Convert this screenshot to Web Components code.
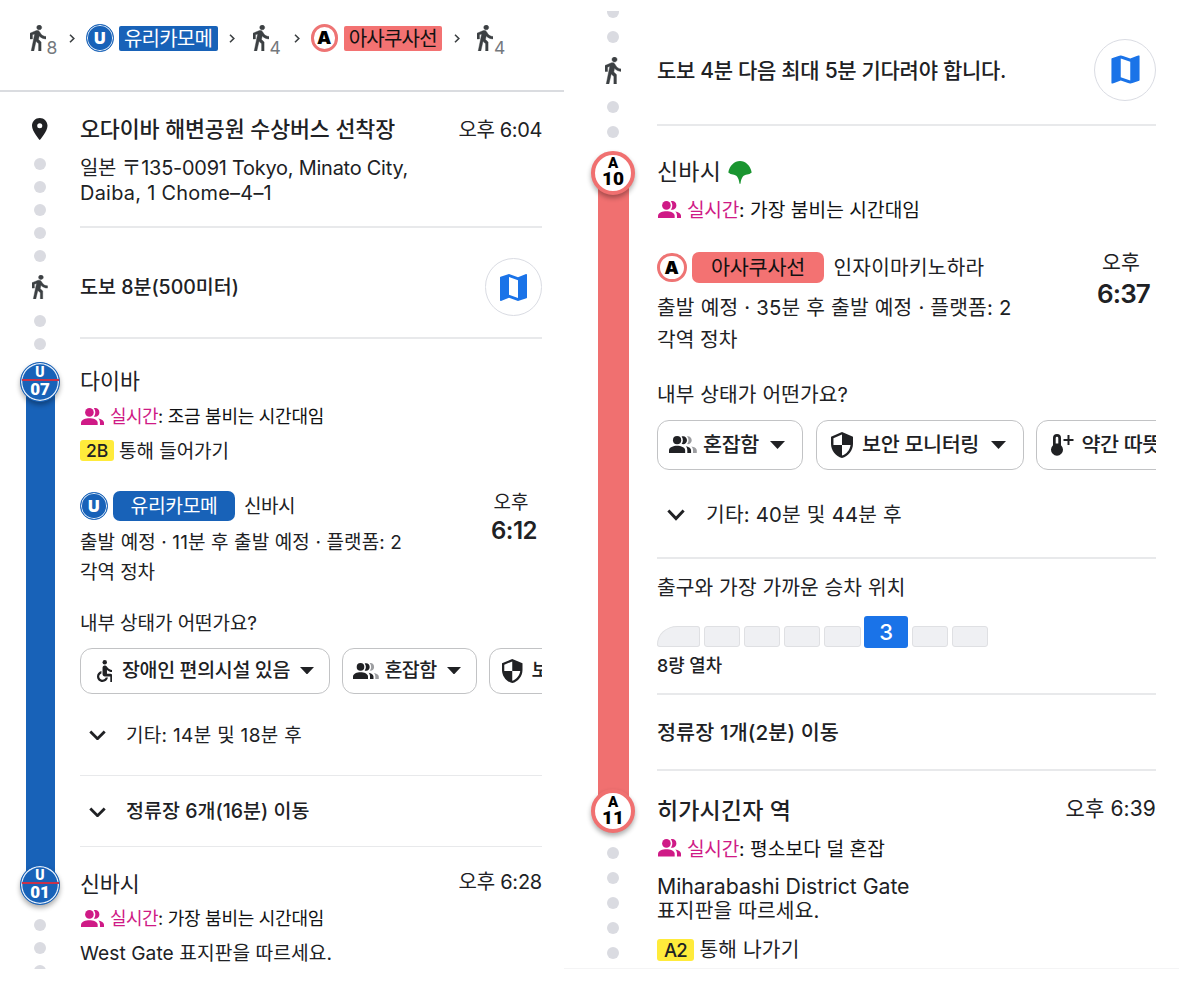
<!DOCTYPE html>
<html lang="ko">
<head>
<meta charset="utf-8">
<title>경로</title>
<style>
body{margin:0;background:#fff;color:#202124;font-family:Inter,"Noto Sans CJK KR",sans-serif;font-size:19px;overflow:hidden}
main{display:grid;grid-template-columns:564px 615px;width:1179px;height:992px;align-items:start}
</style>
</head>
<body>
<main>
<section>
<trip-summary>
<x-icon name="walk" w="16" h="26" style="margin-left:29.5px"></x-icon><fit-text w="10" size="17.5" style="margin:20px 0 0 1px;color:#74787d">8</fit-text>
<x-icon name="next" w="6" h="9" style="margin-left:12.5px"></x-icon>
<line-mark kind="u" style="margin-left:11px">U</line-mark>
<line-pill kind="u" style="--pw:99px;--ph:25px;--pr:2px;margin-left:5px"><fit-text w="88" size="20">유리카모메</fit-text></line-pill>
<x-icon name="next" w="6" h="9" style="margin-left:11px"></x-icon>
<x-icon name="walk" w="16" h="26" style="margin-left:18px"></x-icon><fit-text w="10" size="17.5" style="margin:20px 0 0 1px;color:#74787d">4</fit-text>
<x-icon name="next" w="6" h="9" style="margin-left:14px"></x-icon>
<line-mark kind="a" style="margin-left:11px">A</line-mark>
<line-pill kind="a" style="--pw:98.5px;--ph:25px;--pr:2px;margin-left:5.5px"><fit-text w="88" size="20">아사쿠사선</fit-text></line-pill>
<x-icon name="next" w="6" h="9" style="margin-left:11.5px"></x-icon>
<x-icon name="walk" w="16" h="26" style="margin-left:17.5px"></x-icon><fit-text w="10" size="17.5" style="margin:20px 0 0 1px;color:#74787d">4</fit-text>
</trip-summary>

<route-pane style="height:877px;--rail:80px;--shift:0px;--right:22px">
<x-icon slot="rail" name="pin" w="15.5" h="22" style="margin-top:26px;color:#202124"></x-icon>
<rail-dots slot="rail" count="5" step="11.1" style="margin-top:18px"></rail-dots>
<x-icon slot="rail" name="walk" w="15.5" h="24.5" style="margin-top:12.6px"></x-icon>
<rail-dots slot="rail" count="2" step="11" style="margin-top:15.8px"></rail-dots>
<station-badge slot="rail" kind="u" letter="U" number="07" style="margin-top:11.7px"></station-badge>
<rail-bar slot="rail" style="--bc:#1862b8;width:29px;height:503px;margin:-20px 0"></rail-bar>
<station-badge slot="rail" kind="u" letter="U" number="01"></station-badge>
<rail-dots slot="rail" count="3" step="11.3" style="margin-top:13.7px"></rail-dots>

<trip-row style="--g:22px"><fit-text w="315" size="21.7" weight="500">오다이바 해변공원 수상버스 선착장</fit-text><fit-text class="end" w="83.5" size="20" style="margin-top:1.5px">오후 6:04</fit-text></trip-row>
<trip-row style="--g:11.5px;--h:25px"><fit-text w="328" size="19.9">일본 〒135-0091 Tokyo, Minato City,</fit-text></trip-row>
<trip-row style="--h:25px"><fit-text w="192" size="19.9">Daiba, 1 Chome–4–1</fit-text></trip-row>
<x-rule style="--g:20.5px"></x-rule>
<trip-row style="--g:30.5px;--h:58px"><fit-text w="159" size="19.5" weight="500" style="margin-top:1px">도보 8분(500미터)</fit-text><map-button class="end"></map-button></trip-row>
<x-rule style="--g:21px"></x-rule>
<trip-row style="--g:27.5px"><fit-text w="60" size="21.7">다이바</fit-text></trip-row>
<crowd-note style="--g:9px"><fit-text slot="live" w="48" size="18">실시간</fit-text><fit-text w="166" size="18">: 조금 붐비는 시간대임</fit-text></crowd-note>
<trip-row style="--g:11px;--h:21px"><exit-tag style="--tw:34px"><fit-text w="22" size="17.5" weight="500">2B</fit-text></exit-tag><fit-text w="110" size="19" style="margin-left:5px">통해 들어가기</fit-text></trip-row>
<departure-block style="--g:30px;--tm:-3px;--tr:7px">
<trip-row><line-mark kind="u">U</line-mark><line-pill kind="u" style="--pw:122px;--ph:30px;--pr:7px;margin-left:5.5px"><fit-text w="87" size="19.3">유리카모메</fit-text></line-pill><fit-text w="51" size="19" style="margin-left:9px">신바시</fit-text></trip-row>
<trip-row style="--g:6px"><fit-text w="322" size="19">출발 예정 · 11분 후 출발 예정 · 플랫폼: 2</fit-text></trip-row>
<trip-row><fit-text w="75" size="19">각역 정차</fit-text></trip-row>
<trip-row slot="time" style="--h:28px"><fit-text w="35" size="19" style="margin-right:4px">오후</fit-text></trip-row>
<trip-row slot="time" style="--h:28px"><fit-text w="46" size="24" weight="600" style="margin-left:2px">6:12</fit-text></trip-row>
</departure-block>
<trip-row style="--g:21px"><fit-text w="177" size="19">내부 상태가 어떤가요?</fit-text></trip-row>
<chip-strip style="--g:9.5px;--ch:46px">
<filter-chip style="width:250px"><x-icon name="chair" w="15.5" h="22" style="margin-left:15.5px"></x-icon><fit-text w="168" size="19.5" weight="500" style="margin-left:10px">장애인 편의시설 있음</fit-text><x-icon name="drop" w="14" h="7.5" style="margin-left:10px"></x-icon></filter-chip>
<filter-chip style="width:135.5px"><x-icon name="crowd" w="26" h="16" style="margin-left:10px"></x-icon><fit-text w="52" size="19.5" weight="500" style="margin-left:6px">혼잡함</fit-text><x-icon name="drop" w="14" h="7.5" style="margin-left:10px"></x-icon></filter-chip>
<filter-chip style="width:180px"><x-icon name="shield" w="20.5" h="24" style="margin-left:12.5px"></x-icon><fit-text w="110" size="19.5" weight="500" style="margin-left:9px">보안 모니터링</fit-text></filter-chip>
</chip-strip>
<trip-row style="--g:26.5px"><x-icon name="down" w="17" h="10.5" style="margin-left:9px"></x-icon><fit-text w="176" size="19" style="margin-left:20px">기타: 14분 및 18분 후</fit-text></trip-row>
<x-rule style="--g:24.5px"></x-rule>
<trip-row style="--g:20.5px"><x-icon name="down" w="17" h="10.5" style="margin:1px 0 0 9px"></x-icon><fit-text w="183.5" size="19.5" weight="500" style="margin-left:20px">정류장 6개(16분) 이동</fit-text></trip-row>
<x-rule style="--g:19px"></x-rule>
<trip-row style="--g:22px"><fit-text w="59.5" size="21.7">신바시</fit-text><fit-text class="end" w="83.5" size="20" style="margin-top:-5px">오후 6:28</fit-text></trip-row>
<crowd-note style="--g:8px"><fit-text slot="live" w="48" size="18">실시간</fit-text><fit-text w="166" size="18">: 가장 붐비는 시간대임</fit-text></crowd-note>
<trip-row style="--g:7px"><fit-text w="252" size="19.2">West Gate 표지판을 따르세요.</fit-text></trip-row>
</route-pane>
</section>

<section style="border-bottom:1px solid #f4f4f5">
<route-pane style="margin:11px 0 0 1px;height:957px;--rail:92px;--shift:4px;--right:23px;--rh:2px">
<rail-dots slot="rail" count="2" step="13" style="margin-top:-5px"></rail-dots>
<x-icon slot="rail" name="walk" w="16.5" h="27" style="margin-top:13.500px"></x-icon>
<rail-dots slot="rail" count="2" step="13" style="margin-top:17.500px"></rail-dots>
<station-badge slot="rail" kind="a" letter="A" number="10" style="margin-top:12.5px"></station-badge>
<rail-bar slot="rail" style="--bc:#f07070;width:31px;height:638.5px;margin:-22px 0"></rail-bar>
<station-badge slot="rail" kind="a" letter="A" number="11"></station-badge>
<rail-dots slot="rail" count="5" step="13" style="margin-top:14px"></rail-dots>

<trip-row style="--g:27.5px;--h:62px"><fit-text w="349" size="21" weight="500">도보 4분 다음 최대 5분 기다려야 합니다.</fit-text><map-button class="end" style="--ms:62px;--mi:28.500px"></map-button></trip-row>
<x-rule style="--g:23px"></x-rule>
<trip-row style="--g:31.5px"><fit-text w="64" size="23">신바시</fit-text><x-icon name="leaf" w="24" h="23" style="margin-left:7px;color:#1a9530"></x-icon></trip-row>
<crowd-note style="--g:11px;--iw:25px"><fit-text slot="live" w="52" size="19.2">실시간</fit-text><fit-text w="181" size="19.2">: 가장 붐비는 시간대임</fit-text></crowd-note>
<departure-block style="--g:30px;--tm:-4px;--tr:10.500px">
<trip-row style="--h:31px"><line-mark kind="a" style="--ls:29.500px">A</line-mark><line-pill kind="a" style="--pw:132px;--ph:31px;--pr:7px;margin-left:5.5px"><fit-text w="94" size="20.7">아사쿠사선</fit-text></line-pill><fit-text w="151" size="20.2" style="margin-left:9.5px">인자이마키노하라</fit-text></trip-row>
<trip-row style="--g:9px"><fit-text w="354.500" size="20.3">출발 예정 · 35분 후 출발 예정 · 플랫폼: 2</fit-text></trip-row>
<trip-row style="--g:2px"><fit-text w="80.500" size="20.3">각역 정차</fit-text></trip-row>
<trip-row slot="time"><fit-text w="38" size="20.5" style="margin-right:5px">오후</fit-text></trip-row>
<trip-row slot="time"><fit-text w="53" size="26" weight="600">6:37</fit-text></trip-row>
</departure-block>
<trip-row style="--g:25px"><fit-text w="191" size="20.3">내부 상태가 어떤가요?</fit-text></trip-row>
<chip-strip style="--g:11px;--ch:49.5px;--cg:12.500px">
<filter-chip style="width:146px"><x-icon name="crowd" w="28" h="17" style="margin-left:11px"></x-icon><fit-text w="56" size="20.7" weight="500" style="margin-left:6px">혼잡함</fit-text><x-icon name="drop" w="15" h="8" style="margin-left:11px"></x-icon></filter-chip>
<filter-chip style="width:208px"><x-icon name="shield" w="22" h="26" style="margin-left:14.500px"></x-icon><fit-text w="117" size="20.7" weight="500" style="margin-left:9px">보안 모니터링</fit-text><x-icon name="drop" w="15" h="8" style="margin-left:12px"></x-icon></filter-chip>
<filter-chip style="width:200px"><x-icon name="thermo" w="24" h="22" style="margin-left:12.500px"></x-icon><fit-text w="98" size="20.7" weight="500" style="margin-left:8px">약간 따뜻함</fit-text></filter-chip>
</chip-strip>
<trip-row style="--g:30px"><x-icon name="down" w="18" h="11.5" style="margin:1px 0 0 10px"></x-icon><fit-text w="196" size="20.3" style="margin-left:21px">기타: 40분 및 44분 후</fit-text></trip-row>
<x-rule style="--g:27.5px"></x-rule>
<trip-row style="--g:13px"><fit-text w="248.500" size="20.3">출구와 가장 가까운 승차 위치</fit-text></trip-row>
<train-cars count="8" active="6" label="3" style="--g:14px"></train-cars>
<trip-row style="--g:3px"><fit-text w="65" size="17.8" weight="500">8량 열차</fit-text></trip-row>
<x-rule style="--g:12px;--rh:1.5px"></x-rule>
<trip-row style="--g:23px"><fit-text w="182" size="20.7" weight="500">정류장 1개(2분) 이동</fit-text></trip-row>
<x-rule style="--g:21px"></x-rule>
<trip-row style="--g:25px"><fit-text w="134" size="23" weight="500">히가시긴자 역</fit-text><fit-text class="end" w="90.5" size="21" style="margin-top:-5px">오후 6:39</fit-text></trip-row>
<crowd-note style="--g:11px;--iw:25px"><fit-text slot="live" w="52" size="19.2">실시간</fit-text><fit-text w="146" size="19.2">: 평소보다 덜 혼잡</fit-text></crowd-note>
<trip-row style="--g:12.5px;--h:25px"><fit-text w="252.500" size="21.3">Miharabashi District Gate</fit-text></trip-row>
<trip-row style="--h:25px"><fit-text w="162.500" size="20.3">표지판을 따르세요.</fit-text></trip-row>
<trip-row style="--g:15.5px;--h:22px"><exit-tag style="--tw:37px"><fit-text w="23" size="18.5" weight="500">A2</fit-text></exit-tag><fit-text w="100" size="20.3" style="margin-left:5.5px">통해 나가기</fit-text></trip-row>
</route-pane>
</section>
</main>
<script>
const make = (name, html, setup) => customElements.define(name, class extends HTMLElement {
  constructor() {
    super();
    const t = document.createElement('template');
    t.innerHTML = html;
    this.attachShadow({mode: 'open'}).append(t.content.cloneNode(true));
  }
  connectedCallback() { if (setup) setup(this, this.shadowRoot); }
});

/* text set to a known measure by tracking */
make('fit-text', `<style>:host{display:block;white-space:pre;flex:none;line-height:1;padding-top:1.4px}:host(.end){margin-left:auto}span{display:inline-block;line-height:1;vertical-align:top}</style><span><slot></slot></span>`,
(el, root) => {
  const span = root.querySelector('span'), w = +el.getAttribute('w');
  span.style.fontSize = el.getAttribute('size') + 'px';
  span.style.fontWeight = el.getAttribute('weight') || 400;
  el.style.width = w + 'px';
  const natural = span.getBoundingClientRect().width;
  if (natural) span.style.letterSpacing = (w - natural) / [...el.textContent].length + 'px';
});

const icons = {
  walk: ['6 1.5 13 21.5', '<path d="M13.5 5.5c1.1 0 2-.9 2-2s-.9-2-2-2-2 .9-2 2 .9 2 2 2zM9.8 8.9L7 23h2.1l1.8-8 2.1 2v6h2v-7.5l-2.1-2 .6-3C14.8 12 16.8 13 19 13v-2c-1.9 0-3.5-1-4.3-2.4l-1-1.6c-.4-.6-1-1-1.7-1-.3 0-.5.1-.8.1L6 8.3V13h2V9.6l1.8-.7z" stroke="currentColor" stroke-width=".35"/>'],
  next: ['0 0 6 9', '<path d="M1 .8 4.8 4.5 1 8.2" fill="none" stroke="currentColor" stroke-width="1.6"/>'],
  down: ['0 0 17 10.5', '<path d="M1.3 1.4 8.5 8.7l7.2-7.3" fill="none" stroke="#202124" stroke-width="2.8"/>'],
  drop: ['0 0 14 7.5', '<path d="M0 0h14L7 7.5z" fill="#202124"/>'],
  pin: ['5 2 14 20', '<path d="M12 2C8.13 2 5 5.13 5 9c0 5.25 7 13 7 13s7-7.75 7-13c0-3.87-3.13-7-7-7zm0 9.3a2.3 2.3 0 1 1 0-4.6 2.3 2.3 0 0 1 0 4.6z"/>'],
  map: ['3 3 18 18', '<path d="M20.5 3l-.16.03L15 5.1 9 3 3.36 4.9c-.21.07-.36.25-.36.48V20.5c0 .28.22.5.5.5l.16-.03L9 18.9l6 2.1 5.64-1.9c.21-.07.36-.25.36-.48V3.5c0-.28-.22-.5-.5-.5zM15 19l-6-2.11V5l6 2.11V19z"/>'],
  chair: ['5 2 14 20', '<circle cx="12" cy="4" r="2"/><path d="M19 13v-2c-1.54.02-3.09-.75-4.07-1.83l-1.29-1.43c-.17-.19-.38-.34-.61-.45-.01 0-.01-.01-.02-.01H13c-.35-.2-.75-.3-1.19-.26C10.76 7.11 10 8.04 10 9.09V15c0 1.1.9 2 2 2h5v5h2v-5.5c0-1.1-.9-2-2-2h-3v-3.45c1.29 1.07 3.25 1.94 5 1.95zm-6.17 5c-.41 1.16-1.52 2-2.83 2-1.66 0-3-1.34-3-3 0-1.31.84-2.41 2-2.83V12.1c-2.28.46-4 2.48-4 4.9 0 2.76 2.24 5 5 5 2.42 0 4.44-1.72 4.9-4h-2.07z"/>'],
  shield: ['3 1 18 22', '<path d="M12 1L3 5v6c0 5.55 3.84 10.74 9 12 5.16-1.26 9-6.45 9-12V5l-9-4zm0 10.99h7c-.53 4.12-3.28 7.79-7 8.94V12H5V6.3l7-3.11v8.8z"/>'],
  people: ['0 0 24 18', '<circle cx="8.8" cy="4.5" r="4.5"/><path d="M0 18v-2.8c0-3.4 5-4.7 8.800-4.700s8.600 1.300 8.600 4.700V18z"/><path d="M13.400.3c3-1 5.800 1.200 5.800 4.200s-2.800 5.200-5.800 4.200c2-2.400 2-6 0-8.400zM18 10.800c3 .6 6 1.900 6 4.400V18h-4.200v-2.800c0-1.900-.6-3.300-1.800-4.400z"/>'],
  crowd: ['0 0 26 16', '<g><circle cx="7.500" cy="3.900" r="3.800"/><path d="M0 16v-2.400c0-3 4-4.400 7.500-4.400s7.500 1.400 7.500 4.400V16z"/><path d="M11.700.4c2.700-1 5 1 5 3.500s-2.300 4.500-5 3.500c1.600-2.100 1.600-4.900 0-7zM15.600 9.700c2.500.5 4.900 1.600 4.900 3.900V16H17v-2.400c0-1.700-.4-2.900-1.400-3.900z"/></g><path fill="#9c9da0" d="M16.700.2c2.400-.5 4.400 1.400 4.400 3.700s-2 4.200-4.400 3.700c1.900-2.100 1.900-5.300 0-7.400zM20.700 9.900c2.700.5 5.100 1.500 5.100 3.700V16h-3.500v-2.400c0-1.700-.5-2.800-1.600-3.700z"/>'],
  thermo: ['0 0 24 22', '<path fill-rule="evenodd" d="M3 4a4 4 0 0 1 8 0v7.200a6 6 0 1 1-8 0zM5.700 4v5.600h2.600V4a1.300 1.300 0 0 0-2.600 0z"/><path d="M13.500 6h10M18.500 1v10" stroke="currentColor" stroke-width="2"/>'],
  leaf: ['0 0 24 23', '<path d="M.3 11.500C1.500 4.500 6.500 0 12 0s10.500 4.500 11.700 11.500c-1.500 1.200-3 1.900-4.500 1.900-3.500.2-6.200 3-6.700 9.400h-1c-.5-6.400-3.200-9.200-6.700-9.400-1.500 0-3-.7-4.500-1.900z"/>']
};
make('x-icon', `<style>:host{display:block;flex:none;position:relative}svg{display:block;width:100%;height:100%;fill:currentColor}</style><div></div>`,
(el, root) => {
  const [box, body] = icons[el.getAttribute('name')], w = el.getAttribute('w'), h = el.getAttribute('h');
  root.querySelector('div').innerHTML = `<svg viewBox="${box}" preserveAspectRatio="none" style="width:${w}px;height:${h}px">${body}</svg>`;
});

make('trip-summary', `<style>:host{display:flex;align-items:center;padding-bottom:14px;box-sizing:border-box;border-bottom:2px solid #dadce0;height:92px;color:#3c4043}</style><slot></slot>`);

make('route-pane', `<style>:host{display:flex;overflow:hidden}
.rail{width:var(--rail);padding-left:var(--shift);box-sizing:border-box;display:flex;flex-direction:column;align-items:center;flex:none;color:#3c4043}
.body{flex:1;min-width:0;margin-right:var(--right)}</style><div class="rail"><slot name="rail"></slot></div><div class="body"><slot></slot></div>`);

make('trip-row', `<style>:host{display:flex;align-items:center;box-sizing:border-box;height:var(--h,30px)}</style><slot></slot>`,
 el => gap(el));
make('x-rule', `<style>:host{display:block;height:var(--rh,1.5px);background:#e8e9eb}</style>`, el => gap(el));
make('crowd-note', `<style>:host{display:flex;align-items:center;height:24px;color:#111214}x-icon{margin:-1px 6px 0 1px}.live{color:#cf1a86}</style>
<x-icon class="live" name="people" w="23" h="17.5"></x-icon><span class="live"><slot name="live"></slot></span><slot></slot>`, el => gap(el));
make('departure-block', `<style>:host{display:flex;justify-content:space-between}.time{display:flex;flex-direction:column;align-items:center;margin-top:var(--tm);width:40px;margin-right:calc(var(--tr) + 2px)}</style>
<div><slot></slot></div><div class="time"><slot name="time"></slot></div>`, el => gap(el));
make('chip-strip', `<style>:host{display:flex;gap:var(--cg,11.5px);overflow:hidden;height:var(--ch)}</style><slot></slot>`, el => gap(el));
make('filter-chip', `<style>:host{display:flex;align-items:center;flex:none;box-sizing:border-box;height:100%;border:1.5px solid #c2c3c5;border-radius:12px}</style><slot></slot>`);
make('exit-tag', `<style>:host{display:flex;align-items:center;justify-content:center;width:var(--tw);height:100%;background:#ffeb3b;border-radius:3px}</style><slot></slot>`);

make('map-button', `<style>:host{display:flex;align-items:center;justify-content:center;box-sizing:border-box;width:var(--ms,57.5px);height:var(--ms,57.5px);border:1.5px solid #dadce3;border-radius:50%;color:#1a73e8;margin-left:auto}</style><x-icon name="map" w="27" h="27"></x-icon>`,
(el, root) => {
  const s = parseFloat(getComputedStyle(el).getPropertyValue('--mi'));
  if (s) root.querySelector('x-icon').style.transform = `scale(${s / 27})`;
});

make('line-mark', `<style>:host{display:flex;align-items:center;justify-content:center;flex:none;box-sizing:border-box;width:var(--ls,27.5px);height:var(--ls,27.5px);border-radius:50%;font:900 16px/1 Inter,sans-serif}
:host([kind=u]){background:#1862b8;color:#fff;border:1.5px solid #1862b8;box-shadow:inset 0 0 0 1px #dbe8f6}
:host([kind=a]){background:#fff;color:#000;border:3.5px solid #ee7474;font-size:18px}</style><slot></slot>`);
make('line-pill', `<style>:host{display:flex;align-items:center;justify-content:center;flex:none;width:var(--pw);height:var(--ph);border-radius:var(--pr)}
:host([kind=u]){background:#1862b8;color:#fff}:host([kind=a]){background:#f37272;color:#111}</style><slot></slot>`);

make('rail-dots', `<style>:host{display:flex;flex-direction:column;flex:none}i{display:block;width:12px;height:12px;border-radius:50%;background:#dadbe1}</style>`,
(el, root) => {
  el.style.gap = el.getAttribute('step') + 'px';
  for (let i = 0; i < +el.getAttribute('count'); i++) root.append(document.createElement('i'));
});
make('rail-bar', `<style>:host{display:block;flex:none;background:var(--bc)}</style>`);
make('station-badge', `<style>:host{display:flex;flex-direction:column;align-items:center;flex:none;box-sizing:border-box;border-radius:50%;position:relative;z-index:1;font-family:Roboto,sans-serif;font-weight:700;box-shadow:0 3px 5px rgba(0,0,0,.32)}
:host([kind=u]){width:40px;height:40px;background:#1862b8;color:#fff;border:1px solid #1862b8;box-shadow:0 3px 5px rgba(0,0,0,.32),inset 0 0 0 1.3px #e4eefa}
:host([kind=a]){width:44px;height:44px;background:#fff;color:#000;border:4px solid #f07070}
b{display:block}
:host([kind=u]) .l{font-size:14px;height:16px;line-height:19px;width:37px;text-align:center;border-bottom:2px solid #c8324a}
:host([kind=u]) .n{font-size:17px;line-height:17px}
:host([kind=a]) .l{font-size:15px;line-height:15px;margin-top:1.500px}
:host([kind=a]) .n{font-size:19px;line-height:15px}</style><b class="l"></b><b class="n"></b>`,
(el, root) => {
  root.querySelector('.l').textContent = el.getAttribute('letter');
  root.querySelector('.n').textContent = el.getAttribute('number');
});

make('train-cars', `<style>:host{display:flex;align-items:flex-end;height:32px;gap:4px}
i{display:block;box-sizing:border-box;width:36.300px;height:21px;margin-bottom:1px;background:#eff0f3;border:1px solid #dfe0e3;border-radius:3px}
i:first-of-type{width:42.500px;border-top-left-radius:22px 20px}
b{display:flex;align-items:center;justify-content:center;width:44px;height:32px;margin:0 -.5px;border-radius:3px;background:#1a73e8;color:#fff;font-weight:500;font-size:22px}</style>`,
(el, root) => {
  gap(el);
  for (let i = 1; i <= +el.getAttribute('count'); i++) {
    const car = document.createElement(i === +el.getAttribute('active') ? 'b' : 'i');
    if (car.localName === 'b') car.textContent = el.getAttribute('label');
    root.append(car);
  }
});

/* vertical gap above a row, read from its own --g only */
function gap(el) { el.style.marginTop = el.style.getPropertyValue('--g') || '0px'; }
</script>
</body>
</html>
